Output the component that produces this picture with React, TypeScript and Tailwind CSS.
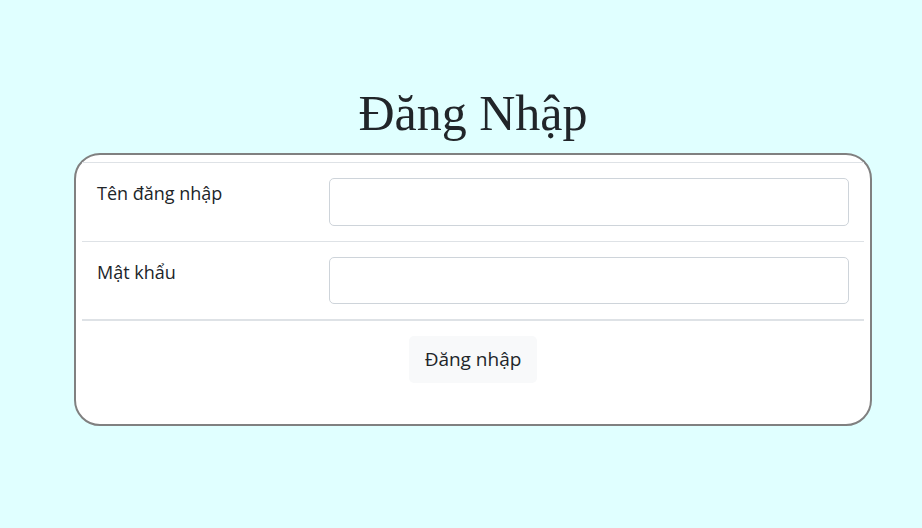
import React from "react";

export default function App() {
  return (
    <div className="w-full h-[528px] bg-[#e0ffff] text-[#212529]" style={{ fontFamily: '"Open Sans", "Noto Sans", sans-serif' }}>
      <div className="ml-[74px] w-[798px] pt-[83px]">
        <h1 className="text-center text-[50px] leading-[60px] mb-[10px] font-normal" style={{ fontFamily: '"Liberation Serif", "Times New Roman", serif' }}>
          Đăng Nhập
        </h1>
        <div className="border-2 border-[#808080] rounded-[26px] bg-white px-[6px] pt-[7px] pb-[26px]">
          <div className="border-t border-[#dee2e6]">
            <div className="flex border-b border-[#dee2e6]">
              <div className="w-[232px] pl-[15px] pt-[15px] text-[18px] leading-[30px]">Tên đăng nhập</div>
              <div className="flex-1 px-[15px] py-[15px]">
                <input type="text" className="block w-full h-[48px] border border-[#ced4da] rounded-[5px] bg-white outline-none" />
              </div>
            </div>
            <div className="flex border-b-2 border-[#dee2e6]">
              <div className="w-[232px] pl-[15px] pt-[15px] text-[18px] leading-[30px]">Mật khẩu</div>
              <div className="flex-1 px-[15px] pt-[15px] pb-[15px]">
                <input type="password" className="block w-full h-[47px] border border-[#ced4da] rounded-[5px] bg-white outline-none" />
              </div>
            </div>
            <div className="flex justify-center pt-[15px] pb-[15px]">
              <button className="h-[47px] px-[16px] rounded-[5px] bg-[#f8f9fa] text-[19px] text-[#212529]">Đăng nhập</button>
            </div>
          </div>
        </div>
      </div>
    </div>
  );
}
